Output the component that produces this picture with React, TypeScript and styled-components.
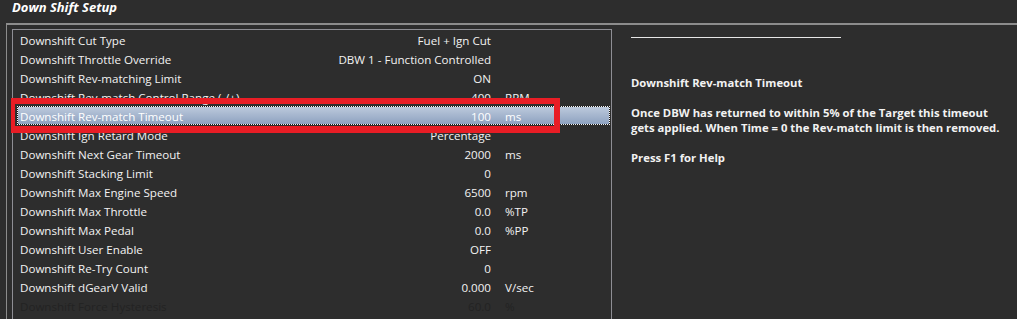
import React from "react";
import styled, { createGlobalStyle } from "styled-components";

const Global = createGlobalStyle`
  html, body { margin: 0; padding: 0; background: #2d2d2d; }
  body { font-family: "Open Sans", "Noto Sans", "Liberation Sans", sans-serif; }
`;

const Window = styled.div`
  width: 1017px;
  height: 319px;
  overflow: hidden;
  position: relative;
  display: flex;
  flex-direction: column;
  background: #2d2d2d;
  color: #f2f2f2;
`;

const TitleBar = styled.div`
  height: 23px;
  padding-left: 12px;
  box-sizing: border-box;
`;

const Title = styled.h1`
  margin: 0;
  font-size: 13px;
  line-height: 14px;
  font-weight: 700;
  font-style: italic;
  color: #ffffff;
`;

const Frame = styled.div`
  flex: 1;
  margin-left: 6px;
  border-top: 2px solid #8c8c8c;
  border-left: 1px solid #8c8c8c;
  padding: 4px 0 0 5px;
  display: flex;
  min-height: 0;
`;

const ListBox = styled.div`
  width: 600px;
  box-sizing: border-box;
  border: 1px solid #8e8e94;
  border-bottom: none;
  flex-shrink: 0;
`;

const Row = styled.div<{ $selected?: boolean; $dim?: boolean }>`
  display: grid;
  grid-template-columns: 313px 160px 1fr;
  height: 19px;
  box-sizing: border-box;
  margin: 0 1px 0 4px;
  border: 1px solid transparent;
  font-size: 11.6px;
  line-height: 19px;
  overflow: hidden;
  color: ${(p) => (p.$dim ? "#232323" : "#f2f2f2")};
  ${(p) =>
    p.$selected &&
    `
    border: 1px dotted #f4f4f4;
    background: linear-gradient(#bcc9dc, #8ea2c0) padding-box,
      linear-gradient(#1c1c1c, #1c1c1c) border-box;
    color: #ffffff;
  `}
`;

const Label = styled.span`
  padding-left: 2px;
  white-space: nowrap;
  overflow: hidden;
`;

const Value = styled.span`
  text-align: right;
  white-space: nowrap;
`;

const Unit = styled.span`
  padding-left: 14px;
  white-space: nowrap;
`;

const HelpPanel = styled.div`
  flex: 1;
  padding: 8px 0 0 19px;
  font-size: 11.3px;
  line-height: 15px;
  font-weight: 700;
  color: #f2f2f2;
`;

const Rule = styled.div`
  width: 210px;
  height: 1px;
  background: #e6e6e6;
  margin-bottom: 37px;
`;

const HelpText = styled.p`
  margin: 0 0 15px 0;
  white-space: nowrap;
`;

const Annotation = styled.div`
  position: absolute;
  left: 11px;
  top: 98px;
  width: 549px;
  height: 35px;
  box-sizing: border-box;
  border-style: solid;
  border-color: #e81d25;
  border-width: 6px 6px 7px 4px;
  pointer-events: none;
`;

type Item = { label: string; value: string; unit?: string; selected?: boolean; dim?: boolean };

const items: Item[] = [
  { label: "Downshift Cut Type", value: "Fuel + Ign Cut" },
  { label: "Downshift Throttle Override", value: "DBW 1 - Function Controlled" },
  { label: "Downshift Rev-matching Limit", value: "ON" },
  { label: "Downshift Rev-match Control Range (-/+)", value: "400", unit: "RPM" },
  { label: "Downshift Rev-match Timeout", value: "100", unit: "ms", selected: true },
  { label: "Downshift Ign Retard Mode", value: "Percentage" },
  { label: "Downshift Next Gear Timeout", value: "2000", unit: "ms" },
  { label: "Downshift Stacking Limit", value: "0" },
  { label: "Downshift Max Engine Speed", value: "6500", unit: "rpm" },
  { label: "Downshift Max Throttle", value: "0.0", unit: "%TP" },
  { label: "Downshift Max Pedal", value: "0.0", unit: "%PP" },
  { label: "Downshift User Enable", value: "OFF" },
  { label: "Downshift Re-Try Count", value: "0" },
  { label: "Downshift dGearV Valid", value: "0.000", unit: "V/sec" },
  { label: "Downshift Force Hysteresis", value: "60.0", unit: "%", dim: true },
];

export default function App() {
  return (
    <>
      <Global />
      <Window>
        <TitleBar>
          <Title>Down Shift Setup</Title>
        </TitleBar>
        <Frame>
          <ListBox>
            {items.map((it) => (
              <Row key={it.label} $selected={it.selected} $dim={it.dim}>
                <Label>{it.label}</Label>
                <Value>{it.value}</Value>
                <Unit>{it.unit ?? ""}</Unit>
              </Row>
            ))}
          </ListBox>
          <HelpPanel>
            <Rule />
            <HelpText>Downshift Rev-match Timeout</HelpText>
            <HelpText>
              Once DBW has returned to within 5% of the Target this timeout
              <br />
              gets applied. When Time = 0 the Rev-match limit is then removed.
            </HelpText>
            <HelpText>Press F1 for Help</HelpText>
          </HelpPanel>
        </Frame>
        <Annotation />
      </Window>
    </>
  );
}
